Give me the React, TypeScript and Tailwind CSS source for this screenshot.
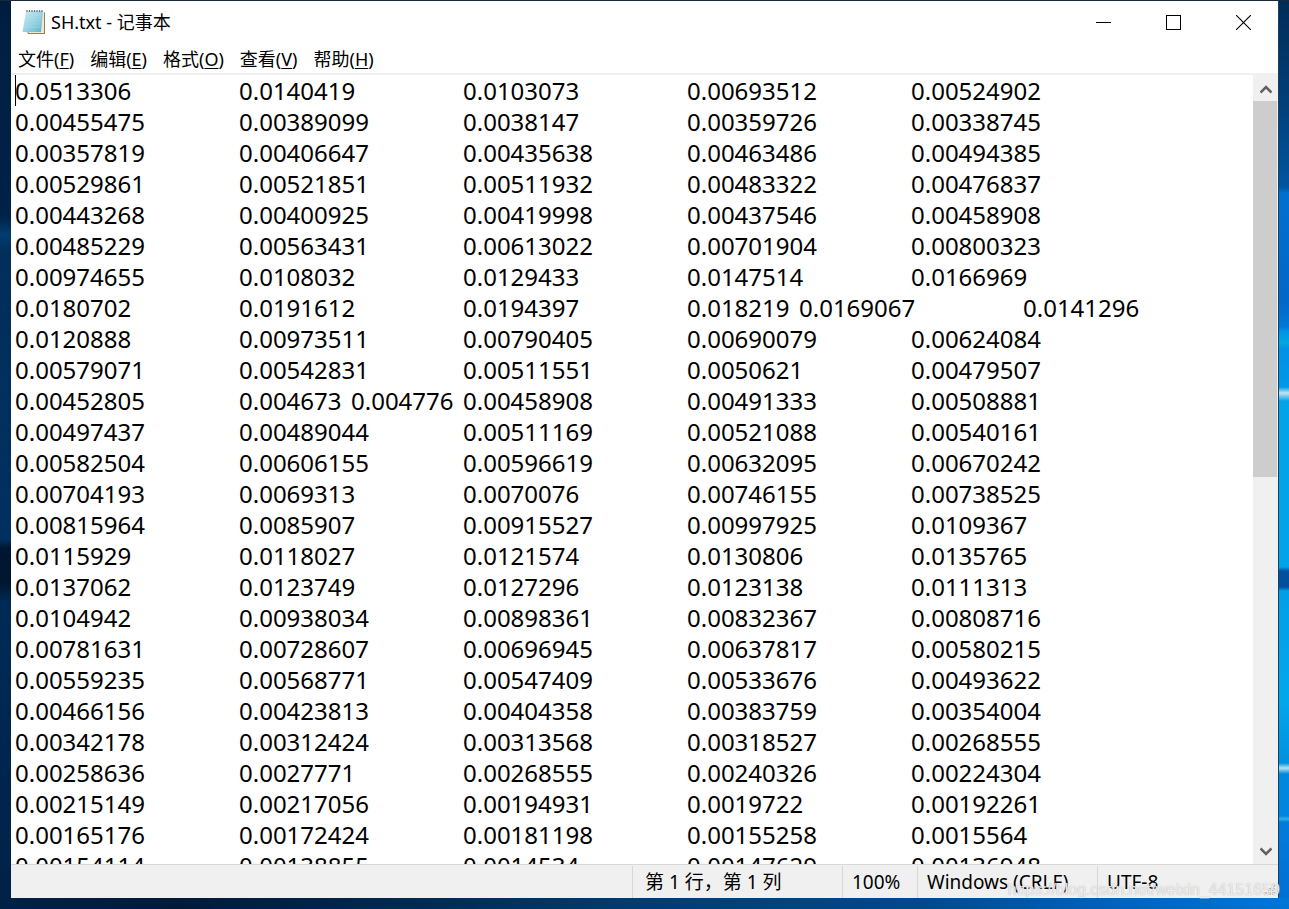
import { useState } from 'react'

const ROWS: string[] = [
  '0.0513306 0.0140419 0.0103073 0.00693512 0.00524902',
  '0.00455475 0.00389099 0.0038147 0.00359726 0.00338745',
  '0.00357819 0.00406647 0.00435638 0.00463486 0.00494385',
  '0.00529861 0.00521851 0.00511932 0.00483322 0.00476837',
  '0.00443268 0.00400925 0.00419998 0.00437546 0.00458908',
  '0.00485229 0.00563431 0.00613022 0.00701904 0.00800323',
  '0.00974655 0.0108032 0.0129433 0.0147514 0.0166969',
  '0.0180702 0.0191612 0.0194397 0.018219 0.0169067 0.0141296',
  '0.0120888 0.00973511 0.00790405 0.00690079 0.00624084',
  '0.00579071 0.00542831 0.00511551 0.0050621 0.00479507',
  '0.00452805 0.004673 0.004776 0.00458908 0.00491333 0.00508881',
  '0.00497437 0.00489044 0.00511169 0.00521088 0.00540161',
  '0.00582504 0.00606155 0.00596619 0.00632095 0.00670242',
  '0.00704193 0.0069313 0.0070076 0.00746155 0.00738525',
  '0.00815964 0.0085907 0.00915527 0.00997925 0.0109367',
  '0.0115929 0.0118027 0.0121574 0.0130806 0.0135765',
  '0.0137062 0.0123749 0.0127296 0.0123138 0.0111313',
  '0.0104942 0.00938034 0.00898361 0.00832367 0.00808716',
  '0.00781631 0.00728607 0.00696945 0.00637817 0.00580215',
  '0.00559235 0.00568771 0.00547409 0.00533676 0.00493622',
  '0.00466156 0.00423813 0.00404358 0.00383759 0.00354004',
  '0.00342178 0.00312424 0.00313568 0.00318527 0.00268555',
  '0.00258636 0.0027771 0.00268555 0.00240326 0.00224304',
  '0.00215149 0.00217056 0.00194931 0.0019722 0.00192261',
  '0.00165176 0.00172424 0.00181198 0.00155258 0.0015564',
  '0.00154114 0.00138855 0.0014534 0.00147629 0.00136948',
]

const MENUS = [
  { label: '文件', key: 'F' },
  { label: '编辑', key: 'E' },
  { label: '格式', key: 'O' },
  { label: '查看', key: 'V' },
  { label: '帮助', key: 'H' },
]

function NotepadIcon() {
  return (
    <svg width="24" height="26" viewBox="0 0 24 26" aria-hidden="true">
      <defs>
        <linearGradient id="page" x1="0" y1="0" x2="1" y2="1">
          <stop offset="0" stopColor="#cdeef4" />
          <stop offset="0.5" stopColor="#9ad5e2" />
          <stop offset="1" stopColor="#5fb3c8" />
        </linearGradient>
      </defs>
      <path d="M5 22 L22 3 L23 4 V25 H6 Z" fill="#8d7f66" />
      <path d="M5 22 L21 3 L22 4 V24 H7 Z" fill="#f1e8d4" />
      <path d="M4 2 H21 L19 23 H0.500 Z" fill="url(#page)" />
      <path d="M4 6 H19.500 M3.500 9 H19 M3 12 H19 M2.500 15 H18.500 M2 18 H18" stroke="#b3dfe9" strokeWidth="0.500" />
      <path d="M5 1 V3 M7.500 1 V3 M10 1 V3 M12.500 1 V3 M15 1 V3 M17.500 1 V3 M20 1 V3" stroke="#66747a" strokeWidth="1.200" />
    </svg>
  )
}

function TitleBar() {
  return (
    <header className="flex h-[42px] shrink-0 items-center pl-[11px]">
      <NotepadIcon />
      <h1 className="ml-[5px] flex-1 text-[18px] leading-6">SH.txt - 记事本</h1>
      <button aria-label="最小化" className="flex h-full w-[70px] items-center justify-center">
        <svg width="15" height="15" shapeRendering="crispEdges"><path d="M0 7.500 H15" stroke="#000" /></svg>
      </button>
      <button aria-label="最大化" className="flex h-full w-[70px] items-center justify-center">
        <svg width="15" height="15" shapeRendering="crispEdges"><path d="M0.500 0.500 H14.500 V14.500 H0.500 Z" fill="none" stroke="#000" /></svg>
      </button>
      <button aria-label="关闭" className="flex h-full w-[70px] items-center justify-center">
        <svg width="15" height="15"><path d="M0 0 L15 15 M15 0 L0 15" stroke="#000" strokeWidth="1.100" /></svg>
      </button>
    </header>
  )
}

function ScrollBar() {
  return (
    <div className="flex w-[25px] shrink-0 flex-col bg-[#f0f0f0]">
      <button aria-label="向上滚动" className="flex h-[26px] items-center justify-center pt-0.5">
        <svg width="12" height="10" viewBox="0 0 12 10"><path d="M0.500 8.500 L6 3 L11.500 8.500" fill="none" stroke="#606060" strokeWidth="2.600" /></svg>
      </button>
      <div className="flex-1">
        <div className="mr-px h-[51%] bg-[#cdcdcd]" />
      </div>
      <button aria-label="向下滚动" className="flex h-[26px] items-center justify-center pt-0.5">
        <svg width="12" height="10" viewBox="0 0 12 10"><path d="M0.500 1.500 L6 7 L11.500 1.500" fill="none" stroke="#606060" strokeWidth="2.600" /></svg>
      </button>
    </div>
  )
}

function StatusBar() {
  return (
    <footer className="relative flex h-[34px] shrink-0 border-t border-[#d7d7d7] bg-[#f0f0f0] pt-px text-[19px] leading-8 whitespace-nowrap">
      <div className="flex-1" />
      <div className="w-[210px] border-l border-[#d7d7d7] pl-3">第 1 行，第 1 列</div>
      <div className="w-[75px] border-l border-[#d7d7d7] pl-[9px]">100%</div>
      <div className="w-[180px] border-l border-[#d7d7d7] pl-[9px]">Windows (CRLF)</div>
      <div className="w-[181px] border-l border-[#d7d7d7] pl-[9px]">UTF-8</div>
      <svg className="absolute right-0.5 bottom-0.5" width="12" height="12" viewBox="0 0 12 12" aria-hidden="true">
        <path d="M8 0h3v3h-3z M8 4h3v3h-3z M4 4h3v3h-3z M8 8h3v3h-3z M4 8h3v3h-3z M0 8h3v3h-3z" fill="#bfbfbf" />
      </svg>
      <span className="absolute -right-0.5 bottom-0 font-['Liberation_Sans',sans-serif] text-[16px] leading-4 text-white/80 [text-shadow:0_0_1px_#999]">
        https://blog.csdn.net/weixin_44151659
      </span>
    </footer>
  )
}

export default function App() {
  const [text, setText] = useState(ROWS.map((r) => r.replaceAll(' ', '\t')).join('\n'))

  return (
    <div className="flex h-screen flex-col overflow-hidden bg-[#1a2a3c] pt-px font-['Noto_Sans','Noto_Sans_CJK_SC',sans-serif] text-black">
      <div className="flex min-h-0 flex-1">
        <div className="w-[11px] shrink-0 bg-[linear-gradient(180deg,#001d40_0%,#002248_24%,#003c70_26%,#002f5c_28%,#00305f_60%,#001630_61%,#001630_65%,#002a55_67%,#002248_100%)]" />
        <main className="flex min-w-0 flex-1 flex-col bg-white">
          <TitleBar />
          <nav className="flex h-[30px] shrink-0 items-center gap-4 px-[7px] pt-0.5 text-[18px] leading-6">
            {MENUS.map((m) => (
              <button key={m.key}>{m.label}(<u className="underline-offset-2">{m.key}</u>)</button>
            ))}
          </nav>
          <div className="relative flex min-h-0 flex-1 border-t-2 border-[#f0f0f0]">
            <textarea
              aria-label="SH.txt"
              className="min-w-0 flex-1 resize-none overflow-hidden pl-1 text-[24px] leading-[31px] whitespace-pre outline-none [tab-size:112px]"
              wrap="off"
              spellCheck={false}
              value={text}
              onChange={(e) => setText(e.target.value)}
            />
            <span className="absolute top-0 left-1 h-[31px] w-px bg-black" />
            <ScrollBar />
          </div>
          <StatusBar />
        </main>
        <div className="w-[11px] shrink-0 border-l border-[#1b3f5c] bg-[linear-gradient(180deg,#002c58_0px,#003f78_100px,#0055a0_186px,#0070d0_192px,#0068c8_300px,#0078d8_326px,#0092e6_330px,#00a8e0_342px,#0092e6_348px,#0098e8_386px,#c0e4f4_392px,#00a4e8_400px,#00a4ea_566px,#0050a0_570px,#0050a0_586px,#00a0e8_590px,#00a8ec_700px,#0090e0_762px,#b0e4f4_767px,#0088e0_773px,#0086e0_815px,#30b0e8_818px,#007cdc_821px,#0070d4_897px)]" />
      </div>
      <div className="h-[11px] shrink-0 bg-[linear-gradient(90deg,#002145_0%,#001b3a_14%,#00284f_30%,#003c72_50%,#004a8c_72%,#0060b8_85%,#0076d8_100%)]" />
    </div>
  )
}
